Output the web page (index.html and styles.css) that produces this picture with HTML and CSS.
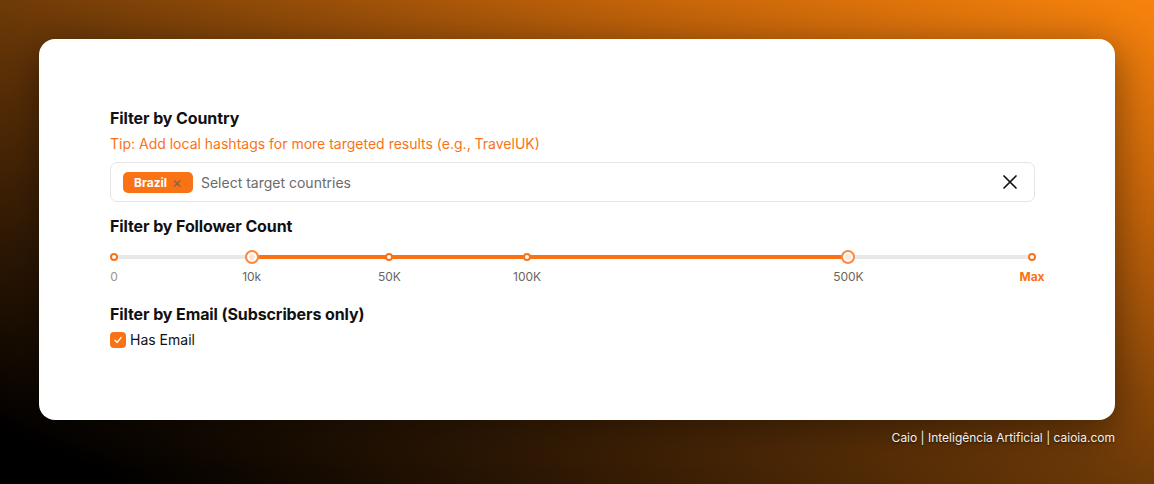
FILE: index.html
```html
<!DOCTYPE html>
<html lang="en">
<head>
<meta charset="UTF-8">
<meta name="viewport" content="width=device-width, initial-scale=1.0">
<title>Filters</title>
<link rel="stylesheet" href="styles.css">
</head>
<body>

<div class="page">
  <div class="card">
    <h3 class="filter-title">Filter by Country</h3>
    <p class="tip">Tip: Add local hashtags for more targeted results (e.g., TravelUK)</p>
    <div class="country-select">
      <span class="tag">Brazil <span class="tag-x">&times;</span></span>
      <span class="placeholder">Select target countries</span>
      <svg class="clear-icon" width="16" height="16" viewBox="0 0 16 16">
        <path d="M2 2 L14 14 M14 2 L2 14" stroke="#111" stroke-width="1.7" stroke-linecap="round" fill="none"/>
      </svg>
    </div>

    <h3 class="filter-title follower-title">Filter by Follower Count</h3>
    <div class="slider">
      <div class="track"></div>
      <div class="range" style="left: 15%; width: 65%;"></div>
      <span class="dot" style="left: 0%;"></span>
      <span class="handle" style="left: 15%;"></span>
      <span class="dot" style="left: 30%;"></span>
      <span class="dot" style="left: 45%;"></span>
      <span class="handle" style="left: 80%;"></span>
      <span class="dot" style="left: 100%;"></span>
    </div>
    <div class="marks">
      <span class="mark zero" style="left: 0%;">0</span>
      <span class="mark" style="left: 15%;">10k</span>
      <span class="mark" style="left: 30%;">50K</span>
      <span class="mark" style="left: 45%;">100K</span>
      <span class="mark" style="left: 80%;">500K</span>
      <span class="mark max" style="left: 100%;">Max</span>
    </div>

    <h3 class="filter-title email-title">Filter by Email (Subscribers only)</h3>
    <label class="check-row">
      <span class="checkbox">
        <svg width="10" height="10" viewBox="0 0 10 10">
          <path d="M2 5.3 L4.2 7.4 L8 2.6" stroke="#fff" stroke-width="1.4" fill="none" stroke-linecap="round" stroke-linejoin="round"/>
        </svg>
      </span>
      Has Email
    </label>
  </div>
  <div class="footer">Caio | Inteligência Artificial | caioia.com</div>
</div>

</body>
</html>
```

FILE: styles.css
```css
html, body {
  margin: 0;
  height: 100%;
}

body {
  font-family: Inter, "Noto Sans", Arial, sans-serif;
  background: linear-gradient(to top right, #000 5%, #2e1804 25%, #6e3a08 50%, #c4640a 78%, #f8830d 100%);
  overflow: hidden;
}

.page {
  padding: 39px 39px 0 39px;
}

.card {
  background: #fff;
  border-radius: 16px;
  height: 381px;
  box-sizing: border-box;
  padding: 67px 80px 0 71px;
  box-shadow: 0 10px 40px rgba(0, 0, 0, 0.45);
}

.filter-title {
  margin: 0;
  font-size: 16px;
  line-height: 24px;
  font-weight: 700;
  color: #111;
  letter-spacing: -0.1px;
}

.tip {
  margin: 4px 0 0 0;
  font-size: 14px;
  line-height: 20px;
  color: #f97316;
}

.country-select {
  margin-top: 8px;
  height: 40px;
  box-sizing: border-box;
  border: 1px solid #e5e5e5;
  border-radius: 7px;
  display: flex;
  align-items: center;
  padding: 0 16px 0 12px;
}

.tag {
  background: #f97316;
  color: #fff;
  font-size: 12px;
  font-weight: 700;
  height: 21px;
  line-height: 21px;
  padding: 0 11px;
  border-radius: 5px;
  display: flex;
  align-items: center;
  gap: 5px;
}

.tag-x {
  color: #8a6045;
  font-weight: 400;
  font-size: 15px;
}

.placeholder {
  margin-left: 8px;
  font-size: 14px;
  color: #6b6b6b;
  flex: 1;
}

.clear-icon {
  display: block;
}

.follower-title {
  margin-top: 12px;
}

.slider {
  position: relative;
  height: 16px;
  margin: 11px 3px 0 4px;
}

.track {
  position: absolute;
  left: 0;
  right: 0;
  top: 6px;
  height: 4px;
  background: #e8e8e8;
  border-radius: 2px;
}

.range {
  position: absolute;
  top: 6px;
  height: 4px;
  background: #f97316;
}

.dot, .handle {
  position: absolute;
  top: 50%;
  transform: translate(-50%, -50%);
  border-radius: 50%;
  box-sizing: border-box;
  background: #fff;
}

.dot {
  width: 8px;
  height: 8px;
  border: 2px solid #f97316;
}

.handle {
  width: 14px;
  height: 14px;
  border: 2px solid #fb8a3c;
  background: #fde6d6;
  box-shadow: inset 0 0 0 2px #fff;
}

.marks {
  position: relative;
  height: 16px;
  margin: 4px 3px 0 4px;
}

.mark {
  position: absolute;
  top: 0;
  transform: translateX(-50%);
  font-size: 12px;
  line-height: 16px;
  color: #6b6560;
}

.mark.zero {
  color: #999490;
}

.mark.max {
  color: #f97316;
  font-weight: 700;
}

.email-title {
  margin-top: 17px;
}

.check-row {
  margin-top: 4px;
  display: flex;
  align-items: center;
  gap: 4px;
  font-size: 14px;
  line-height: 20px;
  color: #111;
}

.checkbox {
  width: 16px;
  height: 16px;
  border-radius: 4px;
  background: #f97316;
  display: flex;
  align-items: center;
  justify-content: center;
}

.footer {
  margin-top: 10px;
  text-align: right;
  font-size: 12px;
  line-height: 16px;
  color: #f2f2f2;
  text-shadow: 0 1px 2px rgba(0, 0, 0, 0.6);
}
```
